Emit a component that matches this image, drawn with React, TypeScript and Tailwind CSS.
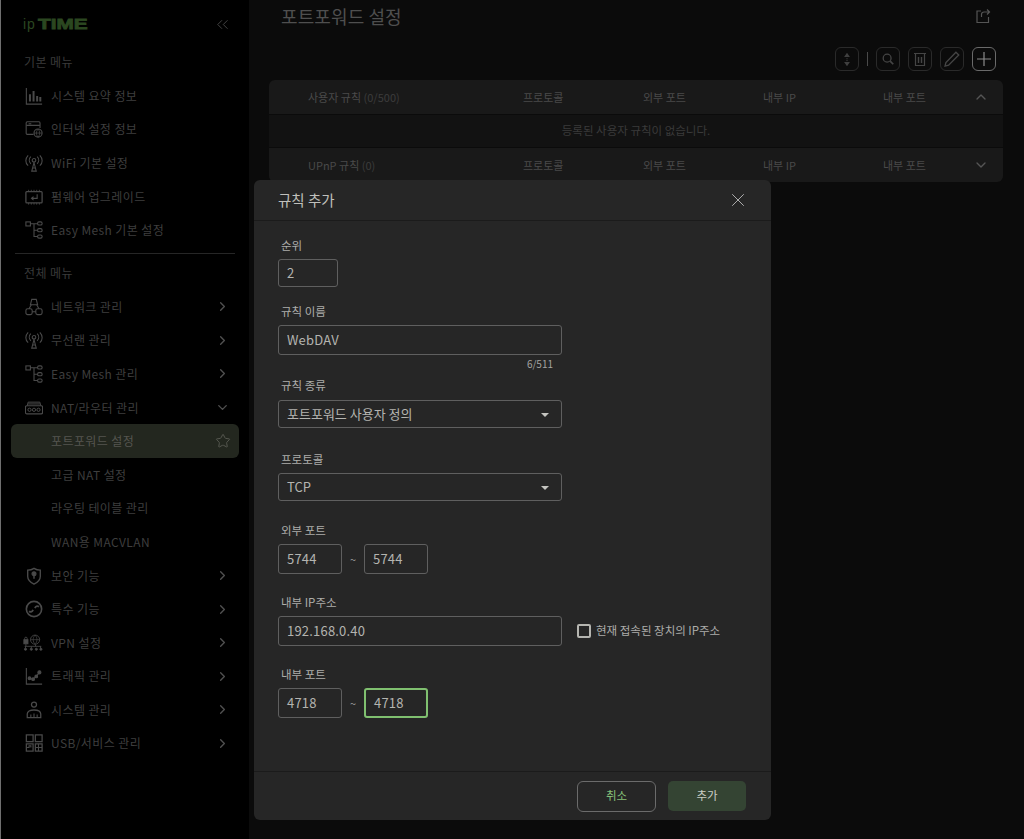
import type { ReactNode } from "react";
import { ChevronDown, ChevronRight, ChevronUp, ChevronsLeft, Star, X } from "lucide-react";

const font = "font-['Noto_Sans_CJK_KR','Noto_Sans',sans-serif]";

const Icon = ({ children }: { children: ReactNode }) => (
  <svg viewBox="0 0 20 20" fill="none" stroke="#4a4a4a" strokeWidth={1.2} className="w-[18px] h-[18px] shrink-0">
    {children}
  </svg>
);

const BarsIcon = () => (
  <Icon>
    <path d="M1.500 1V19H19" />
    <path d="M5.500 16V8M9.500 16V4.500M13.500 16V10M17 16V11" strokeWidth={2.200} />
  </Icon>
);
const WebIcon = () => (
  <Icon>
    <path d="M9.500 16H2.500a1.200 1.200 0 0 1-1.200-1.200V3.200A1.200 1.200 0 0 1 2.500 2h13a1.200 1.200 0 0 1 1.200 1.200V9" />
    <path d="M1.500 6H16.500M4 4.200h3" />
    <circle cx="14.500" cy="14.500" r="4.500" />
    <path d="M10 14.500h9M14.500 10c-2.400 2.700-2.400 6.300 0 9 2.400-2.700 2.400-6.300 0-9Z" strokeWidth={0.800} />
  </Icon>
);
const WifiIcon = () => (
  <Icon>
    <circle cx="10" cy="7" r="2" />
    <path d="M6.500 3c-2.300 2.300-2.300 5.700 0 8M13.500 3c2.300 2.300 2.300 5.700 0 8M3.500 1.500c-3.400 3.500-3.400 8.500 0 11.500M16.500 1.500c3.400 3.500 3.400 8.500 0 11.500" />
    <path d="M10 9.500 7.500 19h5L10 9.500ZM8.500 15.500h3" />
  </Icon>
);
const ChipIcon = () => (
  <Icon>
    <rect x="1" y="4" width="18" height="12.500" rx="1" strokeWidth={1.400} />
    <path d="M4 2v2M7 2v2M10 2v2M13 2v2M16 2v2M4 16.500v2M7 16.500v2M10 16.500v2M13 16.500v2M16 16.500v2" strokeWidth={0.900} />
    <path d="M13.500 7v4.500H7.500M9.500 9.500 7.200 11.500 9.500 13.500" />
  </Icon>
);
const MeshIcon = () => (
  <Icon>
    <rect x="1" y="1" width="5" height="4.500" />
    <rect x="14" y="1" width="5" height="3.500" rx="1.500" />
    <rect x="14" y="8.500" width="5" height="3.500" rx="1.500" />
    <rect x="14" y="15.500" width="5" height="3.500" rx="1.500" />
    <path d="M6 3h8M10 3V17.200H14M10 10.200H14" />
  </Icon>
);
const NetworkIcon = () => (
  <Icon>
    <path d="M7.500 1.500h5L14 7.500H6L7.500 1.500Z" />
    <rect x="1" y="12" width="7" height="6.500" rx="2" />
    <rect x="12" y="12" width="7" height="6.500" rx="2" />
    <path d="M7 7.500 4.500 12M13 7.500l2.500 4.500M8 15.200h4" />
  </Icon>
);
const RouterIcon = () => (
  <svg viewBox="0 0 20 18" fill="none" stroke="#4a4a4a" strokeWidth={1.100} className="w-[18px] h-[18px] shrink-0">
    <rect x="0.500" y="6.500" width="19" height="9" rx="1.500" strokeWidth={1.300} />
    <path d="M3.500 4.500h13M2.500 6.500l1-4h13l1 4" />
    <circle cx="5" cy="11" r="1.800" />
    <circle cx="10" cy="11" r="1.800" />
    <circle cx="15" cy="11" r="1.800" />
  </svg>
);
const ShieldIcon = () => (
  <Icon>
    <path d="M3 3.500c2.700 0 5-.7 7-2 2 1.300 4.300 2 7 2v7c0 4-3 6.500-7 8.500-4-2-7-4.500-7-8.500v-7Z" strokeWidth={1.500} />
    <circle cx="10" cy="7.500" r="2.200" fill="#4a4a4a" />
    <path d="M10 8.500v4.500" strokeWidth={1.600} />
  </Icon>
);
const SpecialIcon = () => (
  <Icon>
    <circle cx="10" cy="10" r="8.500" strokeWidth={1.800} />
    <path d="M4.500 12.500c2 1.500 3.500.5 4.500-1.500M15.500 7.500c-2-1.500-3.500-.5-4.500 1.500" strokeWidth={2} />
  </Icon>
);
const VpnIcon = () => (
  <svg viewBox="0 0 24 20" fill="none" stroke="#4a4a4a" strokeWidth={1} className="w-[20px] h-[18px] shrink-0 -ml-[2px]">
    <circle cx="14.500" cy="6" r="5.500" />
    <path d="M9 6h11M14.500 .5c-3 3.200-3 7.800 0 11 3-3.200 3-7.800 0-11Z" strokeWidth={0.800} />
    <rect x="1" y="6" width="5" height="5" fill="#4a4a4a" />
    <path d="M2 6V4.500a1.500 1.500 0 0 1 3 0V6M3.500 11v3M2 14h20M3 14v2.500M10 14v2.500M15 12v2M21 14v2.500" />
    <circle cx="3" cy="17.500" r="1.300" fill="#4a4a4a" />
    <circle cx="10" cy="17.500" r="1.300" fill="#4a4a4a" />
    <circle cx="16" cy="17.500" r="1.300" fill="#4a4a4a" />
    <circle cx="21.500" cy="17.500" r="1.300" fill="#4a4a4a" />
  </svg>
);
const TrafficIcon = () => (
  <Icon>
    <path d="M1.500 1V19H19" />
    <path d="M5 12.500 9 13.500 12.500 10.500 16 6" />
    <circle cx="5" cy="12.500" r="1.500" fill="#4a4a4a" />
    <circle cx="9" cy="13.500" r="1.500" fill="#4a4a4a" />
    <circle cx="12.500" cy="10.500" r="1.500" fill="#4a4a4a" />
    <circle cx="16" cy="6" r="1.700" fill="#4a4a4a" />
  </Icon>
);
const SystemIcon = () => (
  <Icon>
    <circle cx="10" cy="4" r="2.800" strokeWidth={1.400} />
    <path d="M2.500 18.500v-4c0-3 3-4.500 7.500-4.500s7.500 1.500 7.500 4.500v4H2.500Z" strokeWidth={1.400} />
    <path d="M6.500 15v3M10 14v4M13.500 15v3" />
  </Icon>
);
const UsbIcon = () => (
  <Icon>
    <rect x="1.500" y="1" width="7.500" height="7.500" strokeWidth={1.400} />
    <rect x="11.500" y="1" width="7.500" height="7.500" strokeWidth={1.400} />
    <path d="M1.500 11h7.500v8H1.500zM11.500 11h7.500v8h-7.500z" strokeWidth={1.400} />
    <path d="M1.500 15h3v-2h2v2M11.500 15h7.500M15 11v8" />
  </Icon>
);

type Item = { label: string; icon?: ReactNode; arrow?: "right" | "down"; active?: boolean };

const basicMenu: Item[] = [
  { label: "시스템 요약 정보", icon: <BarsIcon /> },
  { label: "인터넷 설정 정보", icon: <WebIcon /> },
  { label: "WiFi 기본 설정", icon: <WifiIcon /> },
  { label: "펌웨어 업그레이드", icon: <ChipIcon /> },
  { label: "Easy Mesh 기본 설정", icon: <MeshIcon /> },
];

const allMenu: Item[] = [
  { label: "네트워크 관리", icon: <NetworkIcon />, arrow: "right" },
  { label: "무선랜 관리", icon: <WifiIcon />, arrow: "right" },
  { label: "Easy Mesh 관리", icon: <MeshIcon />, arrow: "right" },
  { label: "NAT/라우터 관리", icon: <RouterIcon />, arrow: "down" },
  { label: "포트포워드 설정", active: true },
  { label: "고급 NAT 설정" },
  { label: "라우팅 테이블 관리" },
  { label: "WAN용 MACVLAN" },
  { label: "보안 기능", icon: <ShieldIcon />, arrow: "right" },
  { label: "특수 기능", icon: <SpecialIcon />, arrow: "right" },
  { label: "VPN 설정", icon: <VpnIcon />, arrow: "right" },
  { label: "트래픽 관리", icon: <TrafficIcon />, arrow: "right" },
  { label: "시스템 관리", icon: <SystemIcon />, arrow: "right" },
  { label: "USB/서비스 관리", icon: <UsbIcon />, arrow: "right" },
];

const MenuRow = ({ item }: { item: Item }) => (
  <div
    className={`h-[33.600px] flex items-center pl-[14px] text-[12px] tracking-[0.4px] rounded-md ${
      item.active ? "bg-[#23271f] text-[#55554f] pr-[8px]" : "text-[#3e3e3e] pr-[9px]"
    }`}
  >
    <span className="w-[20px] h-[20px] shrink-0 mr-[6px] flex items-center justify-start">{item.icon}</span>
    <span className="flex-1 whitespace-nowrap">{item.label}</span>
    {item.arrow === "right" && <ChevronRight size={15} strokeWidth={2.200} className="text-[#505050]" />}
    {item.arrow === "down" && <ChevronDown size={15} strokeWidth={2.200} className="text-[#505050]" />}
    {item.active && <Star size={16} strokeWidth={1.500} className="text-[#55574f]" />}
  </div>
);

const Sidebar = () => (
  <aside className="w-[249px] h-full shrink-0 bg-black border-l border-[#6f6f6f] px-[10px]">
    <div className="h-[47px] flex items-center pl-[12px] pr-[7px] pt-[1px] justify-between">
      <div className="flex items-baseline text-[#2b4720] font-['Liberation_Sans',sans-serif] leading-none">
        <span className="text-[14px] tracking-[0.8px]">ip</span>
        <span className="inline-block origin-left scale-x-[1.340] text-[15.500px] font-bold [-webkit-text-stroke:0.8px_#2b4720] ml-[2px]">TIME</span>
      </div>
      <ChevronsLeft size={19} strokeWidth={1} className="text-[#555]" />
    </div>
    <div className="h-[30px] flex items-center pl-[13px] text-[12px] tracking-[0.4px] text-[#3a3a3a]">기본 메뉴</div>
    <div className="mt-[2px]">
      {basicMenu.map((item) => (
        <MenuRow key={item.label} item={item} />
      ))}
    </div>
    <div className="h-px bg-[#262626] mt-[6px] mx-[4px]" />
    <div className="h-[38px] flex items-center pl-[13px] text-[12px] tracking-[0.4px] text-[#3a3a3a]">전체 메뉴</div>
    <div className="-mt-[2px]">
      {allMenu.map((item) => (
        <MenuRow key={item.label} item={item} />
      ))}
    </div>
  </aside>
);

const ToolButton = ({ children, bright }: { children: ReactNode; bright?: boolean }) => (
  <div className={`w-[24px] h-[24px] rounded-[6px] border flex items-center justify-center ${bright ? "border-[#6a6a6a]" : "border-[#2a2a2a]"}`}>
    {children}
  </div>
);

const tableColumns = ["프로토콜", "외부 포트", "내부 IP"];

const TableHeader = ({ title, count, up }: { title: string; count: string; up?: boolean }) => (
  <div className="h-[33.500px] bg-[#191919] flex items-center text-[11px] text-[#4a4a4a] pl-[39px]">
    <div className="w-[215px]">
      {title} <span className="text-[#3c3c3c]">{count}</span>
    </div>
    {tableColumns.map((c) => (
      <div key={c} className="w-[120px]">{c}</div>
    ))}
    <div className="w-[90px]">내부 포트</div>
    {up ? (
      <ChevronUp size={16} strokeWidth={2} className="text-[#555]" />
    ) : (
      <ChevronDown size={16} strokeWidth={2} className="text-[#555]" />
    )}
  </div>
);

const Main = () => (
  <main className="flex-1 min-w-0 h-full bg-[#0b0b0b] pl-[20px] pr-[21px]">
    <div className="h-[31px] flex items-center justify-between pl-[12px] pr-[12px]">
      <h1 className="text-[18px] text-[#4f4f4f] leading-none tracking-[0.1px]">포트포워드 설정</h1>
      <svg viewBox="0 0 16 16" fill="none" stroke="#555" strokeWidth={1.200} className="w-[16px] h-[16px]">
        <path d="M6 3H2v11.500h11.500V9" />
        <path d="M6.500 9V6.500c0-1.500 1-2.500 2.500-2.500h5.500M12 1.500 14.500 4 12 6.500" />
      </svg>
    </div>
    <div className="h-[49px] flex items-end justify-end gap-[8px] pb-[9px] pr-[7px]">
      <ToolButton>
        <svg viewBox="0 0 12 20" className="w-[10px] h-[17px]" fill="#3f3f3f">
          <path d="M6 2 9.500 7h-7ZM6 18 2.500 13h7Z" />
          <rect x="5.300" y="8.500" width="1.400" height="1.200" />
          <rect x="5.300" y="10.700" width="1.400" height="1.200" />
        </svg>
      </ToolButton>
      <div className="w-px h-[14px] bg-[#4a4a4a] mb-[5px]" />
      <ToolButton>
        <svg viewBox="0 0 16 16" fill="none" stroke="#454545" strokeWidth={1.500} className="w-[14px] h-[14px]">
          <circle cx="7" cy="7" r="4.500" />
          <path d="M10.500 10.500 14 14" strokeWidth={2} />
        </svg>
      </ToolButton>
      <ToolButton>
        <svg viewBox="0 0 16 16" fill="none" stroke="#454545" strokeWidth={1.200} className="w-[16px] h-[16px]">
          <path d="M2 2.500h12M3.500 2.500v12h9v-12" />
          <path d="M6.500 6v6M9.500 6v6" strokeWidth={1.400} />
        </svg>
      </ToolButton>
      <ToolButton>
        <svg viewBox="0 0 16 16" fill="none" stroke="#454545" strokeWidth={1.200} className="w-[18px] h-[18px]">
          <path d="M11.500 2 14 4.500 5 13.500l-3.200.8.800-3.200Z" />
        </svg>
      </ToolButton>
      <ToolButton bright>
        <svg viewBox="0 0 16 16" fill="none" stroke="#8a8a8a" strokeWidth={1.200} className="w-[16px] h-[16px]">
          <path d="M8 1v14M1 8h14" />
        </svg>
      </ToolButton>
    </div>
    <div className="rounded-md overflow-hidden flex flex-col gap-px">
      <TableHeader title="사용자 규칙" count="(0/500)" up />
      <div className="h-[32.500px] bg-[#121212] flex items-center justify-center text-[11.500px] text-[#3a3a3a]">
        등록된 사용자 규칙이 없습니다.
      </div>
      <TableHeader title="UPnP 규칙" count="(0)" />
    </div>
  </main>
);

const Label = ({ children, className = "" }: { children: ReactNode; className?: string }) => (
  <div className={`pl-[3px] text-[11.500px] leading-[16px] text-[#adadaa] ${className}`}>{children}</div>
);

const Field = ({ value, className = "", focus }: { value: string; className?: string; focus?: boolean }) => (
  <div
    className={`h-[30px] rounded-[3px] flex items-center pl-[8px] text-[13px] tracking-[0.2px] text-[#b4b4b0] ${
      focus ? "border-2 border-[#80c070]" : "border border-[#5f5f5f]"
    } ${className}`}
  >
    {value}
  </div>
);

const SelectField = ({ value }: { value: string }) => (
  <div className="w-[284px] h-[28px] rounded-[3px] border border-[#5f5f5f] flex items-center justify-between pl-[8px] pr-[12px] text-[13px] text-[#b4b4b0]">
    {value}
    <span className="w-0 h-0 border-x-[4px] border-x-transparent border-t-[4px] border-t-[#c4c4c0] mt-[2px]" />
  </div>
);

const PortRange = ({ a, b, focus }: { a: string; b: string; focus?: boolean }) => (
  <div className="flex items-center mt-[6px]">
    <Field value={a} className="w-[64px]" />
    <span className="w-[22px] text-center text-[11px] text-[#9a9a9a]">~</span>
    <Field value={b} className="w-[64px]" focus={focus} />
  </div>
);

const RuleDialog = () => (
  <div className={`absolute left-[254px] top-[180px] w-[517px] h-[640px] rounded-md bg-[#262626] flex flex-col ${font}`}>
    <div className="h-[41px] shrink-0 border-b border-[#1b1b1b] flex items-center justify-between pl-[24px] pr-[22px]">
      <span className="text-[14.500px] text-[#c0c0bc]">규칙 추가</span>
      <X size={22} strokeWidth={0.900} className="text-[#c8c8c8]" />
    </div>
    <div className="flex-1 pl-[24px] pt-[16px]">
      <Label>순위</Label>
      <div className="mt-[6px] w-[60px] h-[28px] rounded-[3px] border border-[#5f5f5f] flex items-center pl-[8px] text-[13px] text-[#b4b4b0]">2</div>
      <Label className="mt-[16px]">규칙 이름</Label>
      <Field value="WebDAV" className="w-[284px] mt-[6px]" />
      <div className="w-[275px] text-right text-[10px] leading-[18px] text-[#a3a3a0]">6/511</div>
      <Label className="mt-[4px]">규칙 종류</Label>
      <div className="mt-[7px]">
        <SelectField value="포트포워드 사용자 정의" />
      </div>
      <Label className="mt-[23px]">프로토콜</Label>
      <div className="mt-[6px]">
        <SelectField value="TCP" />
      </div>
      <Label className="mt-[21px]">외부 포트</Label>
      <PortRange a="5744" b="5744" />
      <Label className="mt-[20px]">내부 IP주소</Label>
      <div className="flex items-center mt-[6px]">
        <Field value="192.168.0.40" className="w-[284px]" />
        <span className="w-[14px] h-[14px] ml-[15px] mr-[5px] rounded-[2px] border-2 border-[#b5b5b0]" />
        <span className="text-[11.500px] text-[#adadaa]">현재 접속된 장치의 IP주소</span>
      </div>
      <Label className="mt-[20px]">내부 포트</Label>
      <PortRange a="4718" b="4718" focus />
    </div>
    <div className="h-[49px] shrink-0 border-t border-[#1b1b1b] flex items-center justify-end gap-[12px] pr-[25px]">
      <button className="w-[79px] h-[31px] rounded-[6px] border border-[#6b6b6b] text-[11.500px] text-[#86c078]">취소</button>
      <button className="w-[78px] h-[30px] rounded-[5px] bg-[#344433] text-[11.500px] text-[#c8cdc4]">추가</button>
    </div>
  </div>
);

export default function App() {
  return (
    <div className={`relative w-[1024px] h-[839px] overflow-hidden flex ${font}`}>
      <Sidebar />
      <Main />
      <RuleDialog />
    </div>
  );
}
